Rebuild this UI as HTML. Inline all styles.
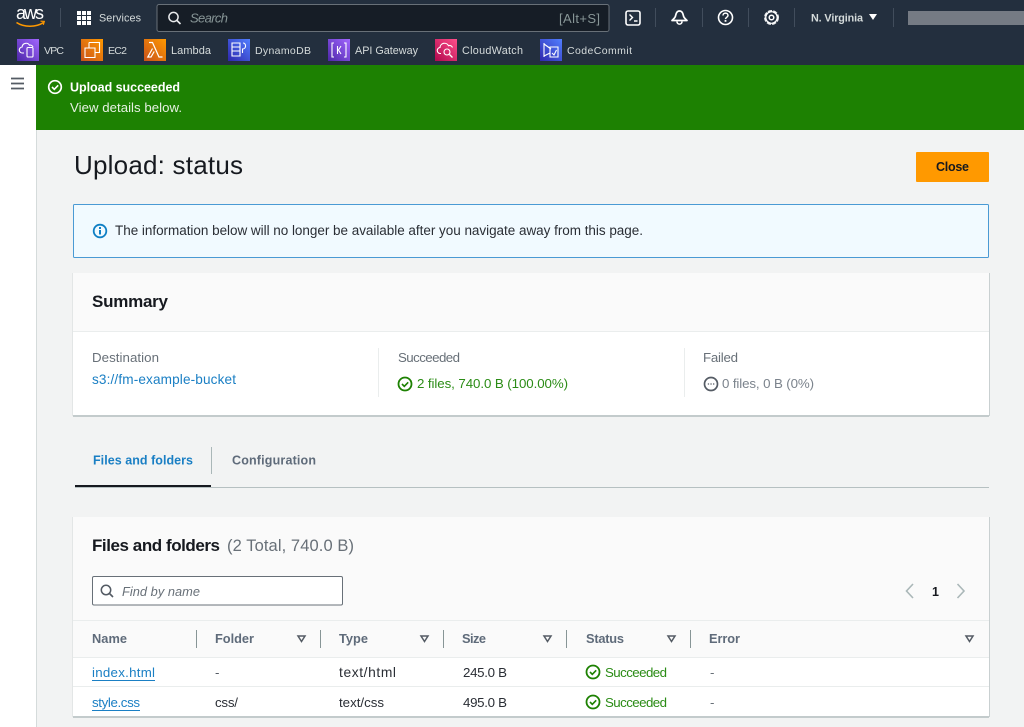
<!DOCTYPE html>
<html><head><meta charset="utf-8"><title>Upload: status</title>
<style>
html,body{margin:0;padding:0;background:#f2f3f3;overflow:hidden}
svg{display:block;font-family:"Liberation Sans",sans-serif}
</style></head><body>
<svg width="1024" height="727" viewBox="0 0 1024 727" xmlns="http://www.w3.org/2000/svg">
<defs>
<linearGradient id="pur" x1="0" y1="1" x2="1" y2="0"><stop offset="0" stop-color="#4d27a8"/><stop offset="1" stop-color="#a166ff"/></linearGradient>
<linearGradient id="org" x1="0" y1="1" x2="1" y2="0"><stop offset="0" stop-color="#c8511b"/><stop offset="1" stop-color="#ff9900"/></linearGradient>
<linearGradient id="blu" x1="0" y1="1" x2="1" y2="0"><stop offset="0" stop-color="#2e27ad"/><stop offset="1" stop-color="#527fff"/></linearGradient>
<linearGradient id="pnk" x1="0" y1="1" x2="1" y2="0"><stop offset="0" stop-color="#b0084d"/><stop offset="1" stop-color="#ff4f8b"/></linearGradient>
</defs>
<rect width="1024" height="727" fill="#f2f3f3"/>
<!-- top bar -->
<rect width="1024" height="65" fill="#232f3e"/>
<text x="16" y="19" font-size="18" fill="#fff" textLength="28">aws</text>
<path d="M16.500 22.500C24 27.500 36 27.500 43.500 22.500" fill="none" stroke="#f90" stroke-width="1.600"/>
<path d="M40.500 21.200l3.800.2-1 3.400" fill="none" stroke="#f90" stroke-width="1.200"/>
<rect x="60" y="8" width="1" height="19" fill="#414d5c"/>
<g fill="#fff"><rect x="77" y="11" width="4" height="4"/><rect x="82" y="11" width="4" height="4"/><rect x="87" y="11" width="4" height="4"/><rect x="77" y="16" width="4" height="4"/><rect x="82" y="16" width="4" height="4"/><rect x="87" y="16" width="4" height="4"/><rect x="77" y="21" width="4" height="4"/><rect x="82" y="21" width="4" height="4"/><rect x="87" y="21" width="4" height="4"/></g>
<text x="99" y="21.500" font-size="10.800" fill="#d5dbdb" textLength="42">Services</text>
<rect x="157" y="4.500" width="452" height="27" rx="2" fill="#161d26" stroke="#687078"/>
<circle cx="173.500" cy="17" r="4.600" fill="none" stroke="#e9ebed" stroke-width="1.500"/><path d="M177 20.500l3.500 3.500" stroke="#e9ebed" stroke-width="1.600"/>
<text x="190" y="22.500" font-size="13" font-style="italic" fill="#879596" textLength="38">Search</text>
<text x="559" y="23" font-size="13" fill="#879596" textLength="41">[Alt+S]</text>
<!-- header icons -->
<rect x="626" y="11" width="14" height="14" rx="2" fill="none" stroke="#fff" stroke-width="1.600"/><path d="M629.500 14.500l3 3-3 3M634 21h3.500" fill="none" stroke="#fff" stroke-width="1.400"/>
<rect x="655" y="8" width="1" height="19" fill="#414d5c"/>
<path d="M679.500 11c-3 0-3.500 3-4 5-.5 2-2 3-3.500 4.500h15c-1.500-1.500-3-2.500-3.500-4.500-.5-2-1-5-4-5z" fill="none" stroke="#fff" stroke-width="1.700" stroke-linejoin="round"/><path d="M677 21.500c0 3.500 5 3.500 5 0" fill="none" stroke="#fff" stroke-width="1.600"/>
<rect x="702" y="8" width="1" height="19" fill="#414d5c"/>
<circle cx="725.500" cy="17.500" r="7" fill="none" stroke="#fff" stroke-width="1.600"/><path d="M723 15.500c0-3.200 5-3.200 5 0 0 1.800-2.500 1.800-2.500 3.600" fill="none" stroke="#fff" stroke-width="1.500"/><rect x="724.600" y="20" width="1.800" height="1.800" fill="#fff"/>
<rect x="748" y="8" width="1" height="19" fill="#414d5c"/>
<circle cx="771.500" cy="17.500" r="6.300" fill="none" stroke="#e9ebed" stroke-width="2.400" stroke-dasharray="4 1.200"/><circle cx="771.500" cy="17.500" r="5.800" fill="none" stroke="#fff" stroke-width="1.200"/><circle cx="771.500" cy="17.500" r="2.300" fill="none" stroke="#fff" stroke-width="1.500"/>
<rect x="794" y="8" width="1" height="19" fill="#414d5c"/>
<text x="811" y="21.500" font-size="10.800" font-weight="bold" fill="#d5dbdb" textLength="52">N. Virginia</text>
<path d="M869 14h8l-4 6z" fill="#fff"/>
<rect x="893" y="8" width="1" height="19" fill="#414d5c"/>
<rect x="908" y="11" width="116" height="14" fill="#757b84"/>
<!-- favorites -->
<g font-size="11" fill="#d5dbdb">
<text x="44" y="54" font-size="10.500" textLength="20">VPC</text>
<text x="108" y="54" font-size="10.500" textLength="19">EC2</text>
<text x="171" y="54" textLength="40">Lambda</text>
<text x="255" y="54" font-size="10.500" textLength="56">DynamoDB</text>
<text x="355" y="54" font-size="10.800" textLength="63">API Gateway</text>
<text x="462" y="54" font-size="10.800" textLength="61">CloudWatch</text>
<text x="567" y="54" font-size="10.500" textLength="65">CodeCommit</text>
</g>
<rect x="17" y="39" width="22" height="22" fill="url(#pur)"/>
<path d="M24 53h-1.500a3 3 0 0 1-.4-6 4 4 0 0 1 7.400-1.800 3 3 0 0 1 3.500 1.800" fill="none" stroke="#fff" stroke-width="1.100"/><rect x="27" y="47.500" width="6" height="9.500" rx="1" fill="none" stroke="#fff" stroke-width="1.100"/>
<rect x="81" y="39" width="22" height="22" fill="url(#org)"/>
<path d="M89 42.500h10.500v10H95M85 48h10v9.500H85z" fill="none" stroke="#fff" stroke-width="1.100"/><path d="M89 42.500V48" stroke="#fff" stroke-width="1.100"/>
<rect x="144" y="39" width="22" height="22" fill="url(#org)"/>
<path d="M149 42.500h3.500l6.500 14.500h3.500M152.500 48.500L147.800 57h3.200l3.200-5.500" fill="none" stroke="#fff" stroke-width="1.200"/>
<rect x="228" y="39" width="22" height="22" fill="url(#blu)"/>
<path d="M232 43h8v13h-8zM232 47h8M232 51h8M243 43c3.500 0 3.500 6-.5 6v4" fill="none" stroke="#fff" stroke-width="1.100"/>
<rect x="328" y="39" width="22" height="22" fill="url(#pur)"/>
<path d="M334 43h-2v14h2M344 43h2v14h-2M337.500 46v8M341 46l-2.500 4 2.500 4" fill="none" stroke="#fff" stroke-width="1.100"/>
<rect x="435" y="39" width="22" height="22" fill="url(#pnk)"/>
<path d="M441 53.500h-.5a3 3 0 0 1-.5-6 4.500 4.500 0 0 1 8.500-1.800 3 3 0 0 1 4 1.800" fill="none" stroke="#fff" stroke-width="1.100"/><circle cx="447" cy="52" r="3" fill="none" stroke="#fff" stroke-width="1.100"/><path d="M449.500 54.500l3 3" stroke="#fff" stroke-width="1.300"/>
<rect x="540" y="39" width="22" height="22" fill="url(#blu)"/>
<path d="M544 43v14M544 44l7 5M550 47h8v10h-8zM544 56l6-3M552 53l2 2 2.500-5" fill="none" stroke="#fff" stroke-width="1.100"/>
<!-- sidebar -->
<rect x="0" y="65" width="36" height="662" fill="#fff"/>
<rect x="36" y="130" width="1" height="597" fill="#d5dbdb"/>
<path d="M11 78.500h13M11 83.500h13M11 88.500h13" stroke="#545b64" stroke-width="1.700"/>
<!-- flash -->
<rect x="36" y="65" width="988" height="65" fill="#1d8102"/>
<circle cx="55" cy="87" r="6.300" fill="none" stroke="#fff" stroke-width="1.700"/><path d="M52 87l2.300 2.300 3.900-4" fill="none" stroke="#fff" stroke-width="1.600"/>
<text x="70" y="91.500" font-size="12.500" font-weight="bold" fill="#fff" textLength="110">Upload succeeded</text>
<text x="70" y="112" font-size="13.200" fill="#e6f0e2" textLength="112">View details below.</text>
<!-- title -->
<text x="74" y="174" font-size="26" fill="#16191f" textLength="169">Upload: status</text>
<rect x="916" y="152" width="73" height="30" rx="1" fill="#ff9900"/>
<text x="936" y="171" font-size="12.500" font-weight="bold" fill="#16191f" textLength="33">Close</text>
<!-- info -->
<rect x="73.500" y="204.500" width="915" height="53" rx="1" fill="#f1faff" stroke="#4a9ad4"/>
<circle cx="100" cy="231" r="6.300" fill="none" stroke="#0f7fc4" stroke-width="1.800"/><rect x="99" y="230" width="2" height="4.500" fill="#0f7fc4"/><rect x="99" y="227" width="2" height="2" fill="#0f7fc4"/>
<text x="115" y="235" font-size="13.500" fill="#2a2e35" textLength="528">The information below will no longer be available after you navigate away from this page.</text>
<!-- summary card -->
<rect x="73" y="273" width="916" height="143" fill="#fff"/>
<rect x="73" y="273" width="916" height="58" fill="#fafafa"/>
<rect x="73" y="331" width="916" height="1" fill="#eaeded"/>
<rect x="73" y="415" width="916" height="2" fill="#c3cbcc"/>
<rect x="72" y="273" width="1" height="143" fill="#e3e6e6"/><rect x="989" y="273" width="1" height="143" fill="#c9d0d1"/>
<text x="92" y="307" font-size="17" font-weight="bold" fill="#16191f" textLength="76">Summary</text>
<text x="92" y="362" font-size="13.300" fill="#687078" textLength="67">Destination</text>
<text x="92" y="384" font-size="13.600" fill="#1a7fc4" textLength="144">s3://fm-example-bucket</text>
<rect x="378" y="348" width="1" height="49" fill="#eaeded"/>
<text x="398" y="362" font-size="13.300" fill="#687078" textLength="62">Succeeded</text>
<circle cx="405" cy="384" r="6.500" fill="none" stroke="#1d8102" stroke-width="1.800"/><path d="M402 384l2.300 2.300 3.900-4" fill="none" stroke="#1d8102" stroke-width="1.600"/>
<text x="417" y="388" font-size="13.300" fill="#2b8c16" textLength="151">2 files, 740.0 B (100.00%)</text>
<rect x="684" y="348" width="1" height="49" fill="#eaeded"/>
<text x="703" y="362" font-size="13.300" fill="#687078" textLength="35">Failed</text>
<circle cx="711" cy="384" r="6.500" fill="none" stroke="#545b64" stroke-width="1.700"/><path d="M707.800 384h1.300M710.400 384h1.300M713 384h1.300" stroke="#545b64" stroke-width="1.300"/>
<text x="722" y="388" font-size="13.300" fill="#7b838c" textLength="92">0 files, 0 B (0%)</text>
<!-- tabs -->
<text x="93" y="464.500" font-size="12.500" font-weight="bold" fill="#1a7fc4" textLength="100">Files and folders</text>
<rect x="211" y="447" width="1" height="27" fill="#aab7b8"/>
<text x="232" y="464.500" font-size="12.500" font-weight="bold" fill="#5f6b7a" textLength="84">Configuration</text>
<rect x="75" y="487" width="914" height="1" fill="#b6c0c1"/>
<rect x="75" y="485" width="136" height="2" fill="#16191f"/>
<!-- files card -->
<rect x="73" y="517" width="916" height="200" fill="#fff"/>
<rect x="73" y="517" width="916" height="140" fill="#fafafa"/>
<rect x="73" y="620" width="916" height="1" fill="#eaeded"/>
<rect x="73" y="657" width="916" height="1" fill="#eaeded"/>
<rect x="73" y="686" width="916" height="1" fill="#eaeded"/>
<rect x="73" y="716" width="916" height="2" fill="#c3cbcc"/>
<rect x="72" y="517" width="1" height="200" fill="#e3e6e6"/><rect x="989" y="517" width="1" height="200" fill="#c9d0d1"/>
<text x="92" y="551" font-size="17" font-weight="bold" fill="#16191f" textLength="128">Files and folders</text>
<text x="227" y="551" font-size="16.500" fill="#687078" textLength="127">(2 Total, 740.0 B)</text>
<rect x="92.500" y="576.500" width="250" height="28.500" rx="1.500" fill="#fff" stroke="#687078"/>
<circle cx="106" cy="590" r="4.700" fill="none" stroke="#545b64" stroke-width="1.500"/><path d="M109.500 593.500l3.500 3.500" stroke="#545b64" stroke-width="1.600"/>
<text x="122" y="596" font-size="12.800" font-style="italic" fill="#687078" textLength="78">Find by name</text>
<path d="M913 584l-6.500 7 6.500 7" fill="none" stroke="#aab7b8" stroke-width="1.600"/>
<text x="932" y="596" font-size="12.500" font-weight="bold" fill="#16191f">1</text>
<path d="M957.500 584l6.500 7-6.500 7" fill="none" stroke="#aab7b8" stroke-width="1.600"/>
<!-- table header -->
<g font-size="12.800" font-weight="bold" fill="#5f6b7a">
<text x="92" y="643" textLength="35">Name</text>
<text x="215" y="643" textLength="39">Folder</text>
<text x="339" y="643" textLength="29">Type</text>
<text x="462" y="643" textLength="24">Size</text>
<text x="586" y="643" textLength="38">Status</text>
<text x="709" y="643" textLength="31">Error</text>
</g>
<g fill="#879596">
<rect x="196" y="630" width="1" height="18"/><rect x="320" y="630" width="1" height="18"/><rect x="443" y="630" width="1" height="18"/><rect x="566" y="630" width="1" height="18"/><rect x="690" y="630" width="1" height="18"/>
</g>
<g fill="none" stroke="#545b64" stroke-width="1.500">
<path d="M298 636h7l-3.500 5.500z"/><path d="M421 636h7l-3.500 5.500z"/><path d="M544 636h7l-3.500 5.500z"/><path d="M668 636h7l-3.500 5.500z"/><path d="M966 636h7l-3.500 5.500z"/>
</g>
<!-- rows -->
<g font-size="13.300" fill="#2a2e35">
<text x="92" y="677" fill="#1a7fc4" textLength="63">index.html</text>
<text x="215" y="677" fill="#545b64">-</text>
<text x="339" y="677" font-size="13.800" textLength="57">text/html</text>
<text x="463" y="677" textLength="44">245.0 B</text>
<text x="605" y="677" fill="#2b8c16" textLength="62">Succeeded</text>
<text x="710" y="677" fill="#687078">-</text>
<text x="92" y="707" fill="#1a7fc4" textLength="48">style.css</text>
<text x="215" y="707" textLength="23">css/</text>
<text x="339" y="707" textLength="45">text/css</text>
<text x="463" y="707" textLength="44">495.0 B</text>
<text x="605" y="707" fill="#2b8c16" textLength="62">Succeeded</text>
<text x="710" y="707" fill="#687078">-</text>
</g>
<rect x="92" y="680" width="63" height="1" fill="#1a7fc4"/>
<rect x="92" y="710" width="48" height="1" fill="#1a7fc4"/>
<circle cx="593" cy="672" r="6.500" fill="none" stroke="#1d8102" stroke-width="1.800"/><path d="M590 672l2.300 2.300 3.900-4" fill="none" stroke="#1d8102" stroke-width="1.600"/>
<circle cx="593" cy="702" r="6.500" fill="none" stroke="#1d8102" stroke-width="1.800"/><path d="M590 702l2.300 2.300 3.900-4" fill="none" stroke="#1d8102" stroke-width="1.600"/>
</svg>
</body></html>
